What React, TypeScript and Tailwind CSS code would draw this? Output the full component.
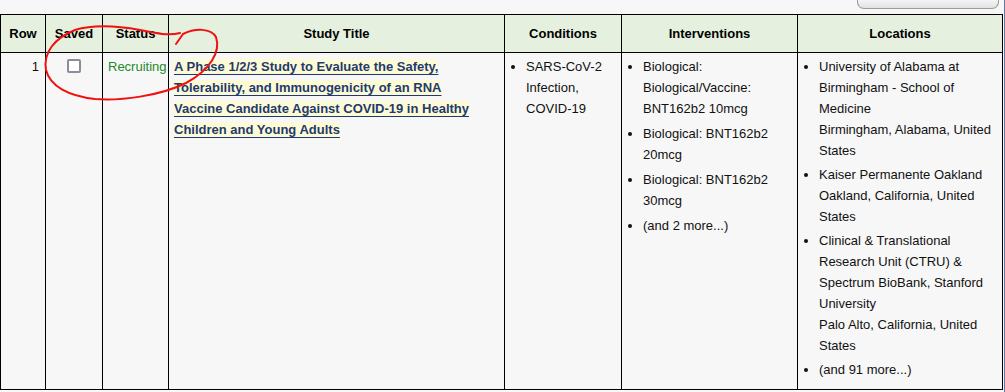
import React from "react";

const conditions = ["SARS-CoV-2 Infection, COVID-19"];

const interventions = [
  ["Biological:", "Biological/Vaccine:", "BNT162b2 10mcg"],
  ["Biological: BNT162b2", "20mcg"],
  ["Biological: BNT162b2", "30mcg"],
  ["(and 2 more...)"],
];

const locations = [
  ["University of Alabama at", "Birmingham - School of", "Medicine", "Birmingham, Alabama, United", "States"],
  ["Kaiser Permanente Oakland", "Oakland, California, United", "States"],
  ["Clinical & Translational", "Research Unit (CTRU) &", "Spectrum BioBank, Stanford", "University", "Palo Alto, California, United", "States"],
  ["(and 91 more...)"],
];

function Lines({ lines }: { lines: string[] }) {
  return (
    <>
      {lines.map((l, i) => (
        <React.Fragment key={i}>
          {i > 0 && <br />}
          {l}
        </React.Fragment>
      ))}
    </>
  );
}

export default function App() {
  const th = "border border-black bg-[#e5f0df] h-[38px] text-[13px] font-bold text-black text-center align-middle";
  const td = "border border-black align-top pt-[3px] text-[13px] leading-[21px] text-[#111]";

  return (
    <div
      className="relative w-[1005px] h-[392px] overflow-hidden bg-[#f7f7f7]"
      style={{ fontFamily: '"Liberation Sans", Arial, sans-serif' }}
    >
      <div className="flex h-[14px] justify-end pr-[6px]">
        <div className="w-[142px] h-[9px] border-x border-b border-[#9c9c9c] rounded-b-[7px] bg-gradient-to-b from-[#f4f4f4] to-[#e2e2e2]" />
      </div>

      <div className="flex">
        <table className="w-[1002px] h-[376px] table-fixed border-collapse">
          <colgroup>
            <col className="w-[45px]" />
            <col className="w-[57px]" />
            <col className="w-[66px]" />
            <col className="w-[336px]" />
            <col className="w-[117px]" />
            <col className="w-[176px]" />
            <col className="w-[205px]" />
          </colgroup>
          <thead>
            <tr>
              <th className={th}>Row</th>
              <th className={th}>Saved</th>
              <th className={th}>Status</th>
              <th className={th}>Study Title</th>
              <th className={th}>Conditions</th>
              <th className={th}>Interventions</th>
              <th className={th}>Locations</th>
            </tr>
          </thead>
          <tbody>
            <tr>
              <td className={`${td} text-right pr-[6px]`}>1</td>
              <td className={`${td} text-center`}>
                <span className="inline-block w-[14px] h-[14px] mt-[3px] border-2 border-[#8c8c9a] rounded-[2px] bg-white align-top" />
              </td>
              <td className={`${td} pl-[5px] text-[#23892a]`}>Recruiting</td>
              <td className={`${td} pl-[5px] pr-[4px]`}>
                <a className="font-bold text-[#1f3a6e] bg-[#fdfbd6] underline decoration-[#1f3a6e] underline-offset-[3px]">
                  A Phase 1/2/3 Study to Evaluate the Safety,
                  <br />
                  Tolerability, and Immunogenicity of an RNA
                  <br />
                  Vaccine Candidate Against COVID-19 in Healthy
                  <br />
                  Children and Young Adults
                </a>
              </td>
              <td className={td}>
                <ul className="list-disc pl-[21px] pr-[4px]">
                  {conditions.map((c) => (
                    <li key={c}>
                      <Lines lines={["SARS-CoV-2", "Infection,", "COVID-19"]} />
                    </li>
                  ))}
                </ul>
              </td>
              <td className={td}>
                <ul className="list-disc pl-[21px] pr-[4px] flex flex-col gap-[4px]">
                  {interventions.map((it, i) => (
                    <li key={i}>
                      <Lines lines={it} />
                    </li>
                  ))}
                </ul>
              </td>
              <td className={td}>
                <ul className="list-disc pl-[21px] pr-[4px] flex flex-col gap-[3px]">
                  {locations.map((it, i) => (
                    <li key={i}>
                      <Lines lines={it} />
                    </li>
                  ))}
                </ul>
              </td>
            </tr>
          </tbody>
        </table>
        <div className="w-[1px]" />
        <div className="w-[2px] h-[392px] -mt-[14px] bg-[#5b7aa6]" />
      </div>

      {/* hand-drawn red circle */}
      <svg className="pointer-events-none absolute left-0 top-0" width="1005" height="392">
        <path
          d="M176 44 L183 34 C195 28 211 28 216 37 C221 52 210 70 186 83 C160 96 120 101 95 99 C68 96 50 86 46 70 C43 52 55 38 75 30 C95 24 118 26 140 30 C155 33 168 36 180 33"
          fill="none"
          stroke="#f01010"
          strokeWidth="2"
          strokeLinecap="round"
          strokeLinejoin="round"
        />
      </svg>
    </div>
  );
}
